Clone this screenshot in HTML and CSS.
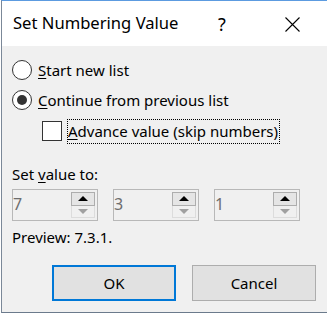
FILE: index.html
```html
<!DOCTYPE html>
<html lang="en">
<head>
    <meta charset="UTF-8">
    <meta name="viewport" content="width=device-width, initial-scale=1.0">
    <title>Set Numbering Value</title>
    <link rel="stylesheet" href="styles.css">
</head>
<body>
    <div class="dialog">
        <div class="titlebar">
            <span class="title">Set Numbering Value</span>
            <span class="help">?</span>
            <svg class="close" width="15" height="15" viewBox="0 0 15 15">
                <path d="M0.5 0.5 L14.5 14.5 M14.5 0.5 L0.5 14.5" stroke="#000" stroke-width="1.1" fill="none"/>
            </svg>
        </div>

        <div class="content">
            <div class="row radio-row first">
                <span class="radio"></span>
                <span class="label"><u>S</u>tart new list</span>
            </div>
            <div class="row radio-row">
                <span class="radio checked"></span>
                <span class="label"><u>C</u>ontinue from previous list</span>
            </div>
            <div class="row check-row">
                <span class="checkbox"></span>
                <span class="label focus"><u>A</u>dvance value (skip numbers)</span>
            </div>

            <div class="set-label">Set <u>v</u>alue to:</div>
            <div class="spins">
                <div class="spin">
                    <span class="value">7</span>
                    <div class="spin-btns">
                        <span class="up"></span>
                        <span class="down"></span>
                    </div>
                </div>
                <div class="spin">
                    <span class="value">3</span>
                    <div class="spin-btns">
                        <span class="up"></span>
                        <span class="down"></span>
                    </div>
                </div>
                <div class="spin">
                    <span class="value">1</span>
                    <div class="spin-btns">
                        <span class="up"></span>
                        <span class="down"></span>
                    </div>
                </div>
            </div>

            <div class="preview">Preview: 7.3.1.</div>

            <div class="buttons">
                <button class="btn default">OK</button>
                <button class="btn">Cancel</button>
            </div>
        </div>
    </div>
</body>
</html>
```

FILE: styles.css
```css
body {
    margin: 0;
    background-color: #fff;
    overflow: hidden;
    font-family: "Noto Sans", "Open Sans", sans-serif;
    font-size: 15px;
    color: #000;
}
u {
    text-decoration-thickness: 1px;
    text-underline-offset: 2px;
}
.dialog {
    margin-left: 1px;
    width: 340px;
    border-left: 1px solid #7b8898;
    border-top: 1px solid #5c9be0;
    border-bottom: 1px solid #6b7a8c;
}
.titlebar {
    height: 45px;
    background-color: #fff;
    display: flex;
    align-items: center;
    padding-left: 11px;
}
.title {
    width: 205px;
    font-size: 16.6px;
    line-height: 20px;
    padding-bottom: 1px;
}
.help {
    width: 67px;
    font-size: 18px;
    line-height: 20px;
}
.close {
    display: block;
    margin-top: 1px;
}
.content {
    height: 266px;
    background-color: #f0f0f0;
    padding-left: 10px;
    box-sizing: border-box;
    display: flex;
    flex-direction: column;
}
.row {
    display: flex;
    align-items: center;
    height: 20px;
    line-height: 20px;
}
.radio-row.first {
    margin-top: 14px;
}
.radio-row + .radio-row {
    margin-top: 10px;
}
.radio {
    width: 20px;
    height: 20px;
    box-sizing: border-box;
    border: 1px solid #333;
    border-radius: 50%;
    background-color: #fff;
    margin-right: 6px;
    display: flex;
    align-items: center;
    justify-content: center;
}
.radio.checked::after {
    content: "";
    width: 10px;
    height: 10px;
    border-radius: 50%;
    background-color: #333;
}
.check-row {
    margin-top: 11px;
    padding-left: 30px;
}
.checkbox {
    width: 20px;
    height: 20px;
    box-sizing: border-box;
    border: 1px solid #333;
    background-color: #fff;
    margin-right: 5px;
}
.label.focus {
    border: 1px dotted #000;
    padding: 1px 1px 2px 0px;
    line-height: 20px;
}
.set-label {
    margin-top: 23px;
    line-height: 20px;
}
.spins {
    display: flex;
    gap: 15px;
    margin-top: 5px;
}
.spin {
    width: 86px;
    height: 32px;
    box-sizing: border-box;
    border: 1px solid #b8b8b8;
    padding: 2px 2px 2px 0;
    display: flex;
    align-items: center;
}
.spin .value {
    flex: 1;
    color: #6d6d6d;
    font-size: 16px;
    line-height: 20px;
    padding-bottom: 2px;
}
.spin-btns {
    width: 24px;
    height: 26px;
    display: flex;
    flex-direction: column;
}
.up, .down {
    flex: 1;
    box-sizing: border-box;
    display: flex;
    align-items: center;
    justify-content: center;
}
.up {
    border: 1px solid #adadad;
    background-color: #e5e5e5;
}
.down {
    border: 1px solid #dcdcdc;
    border-top: none;
    background-color: #f0f0f0;
}
.up::after {
    content: "";
    border-left: 5px solid transparent;
    border-right: 5px solid transparent;
    border-bottom: 5px solid #000;
}
.down::after {
    content: "";
    border-left: 5px solid transparent;
    border-right: 5px solid transparent;
    border-top: 5px solid #a0a0a0;
}
.preview {
    margin-top: 6px;
    line-height: 20px;
}
.buttons {
    display: flex;
    gap: 16px;
    margin-top: 18px;
    padding-left: 40px;
}
.btn {
    width: 124px;
    height: 36px;
    box-sizing: border-box;
    background-color: #e1e1e1;
    border: 1px solid #adadad;
    font-family: inherit;
    font-size: 15px;
    color: #000;
    padding: 0;
}
.btn.default {
    border: 2px solid #0078d7;
}
```
